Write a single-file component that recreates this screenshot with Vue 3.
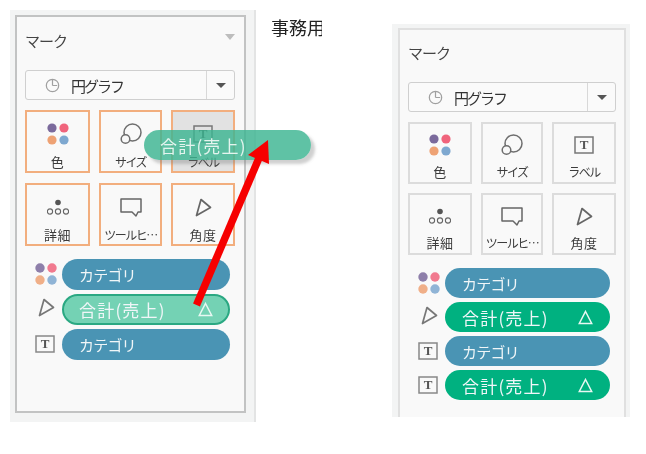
<script setup>
const panels = [
  {
    key: 'left',
    rows: [
      { icon: 'color', label: 'カテゴリ', kind: 'blue' },
      { icon: 'angle', label: '合計(売上)', kind: 'soft', delta: true },
      { icon: 'text', label: 'カテゴリ', kind: 'blue' }
    ]
  },
  {
    key: 'right',
    rows: [
      { icon: 'color', label: 'カテゴリ', kind: 'blue' },
      { icon: 'angle', label: '合計(売上)', kind: 'green', delta: true },
      { icon: 'text', label: 'カテゴリ', kind: 'blue' },
      { icon: 'text', label: '合計(売上)', kind: 'green', delta: true }
    ]
  }
]
const cards = [
  { icon: 'color', label: '色' },
  { icon: 'size', label: 'サイズ', tight: true },
  { icon: 'text', label: 'ラベル', tight: true, active: true },
  { icon: 'detail', label: '詳細' },
  { icon: 'tip', label: 'ツールヒ…', tight: true },
  { icon: 'angle', label: '角度' }
]
const dots = [
  { cx: 5, cy: 5, fill: '#7b6a9c' },
  { cx: 17, cy: 5, fill: '#f0647c' },
  { cx: 5, cy: 17, fill: '#eea274' },
  { cx: 17, cy: 17, fill: '#7ea8d0' }
]
</script>

<template>
  <div class="page">
    <section v-for="p in panels" :key="p.key" class="panel" :class="p.key">
      <div class="inner">
        <div class="head">
          <span class="title">マーク</span>
          <span v-if="p.key === 'left'" class="caret"></span>
        </div>
        <div class="select">
          <div class="select-main">
            <svg width="15" height="15" viewBox="0 0 16 16" fill="none" stroke="#a0a0a0" stroke-width="1.3">
              <circle cx="8" cy="8" r="6.6" />
              <path d="M8 8V2M8 8h5" />
            </svg>
            <span class="select-text">円グラフ</span>
          </div>
          <div class="select-arrow"><i></i></div>
        </div>
        <div class="cards">
          <div v-for="c in cards" :key="c.label" class="card" :class="{ active: c.active }">
            <div class="card-icon">
              <svg v-if="c.icon === 'color'" width="22" height="22" viewBox="0 0 22 22">
                <circle v-for="d in dots" :key="d.fill" :cx="d.cx" :cy="d.cy" r="4.6" :fill="d.fill" />
              </svg>
              <svg v-else-if="c.icon === 'size'" width="22" height="22" viewBox="0 0 22 22" fill="none" stroke="#6e6e6e" stroke-width="1.5">
                <circle cx="12.500" cy="9.500" r="8.500" />
                <circle cx="5.500" cy="16" r="4.300" fill="#f9f9f9" />
              </svg>
              <svg v-else-if="c.icon === 'text'" width="20" height="18" viewBox="0 0 20 18">
                <rect x="1" y="1" width="18" height="16" fill="none" stroke="#777" stroke-width="1.5" />
                <text x="10" y="13" text-anchor="middle" class="tee">T</text>
              </svg>
              <svg v-else-if="c.icon === 'detail'" width="22" height="16" viewBox="0 0 22 16" fill="none" stroke="#666" stroke-width="1.100">
                <circle cx="11" cy="3.500" r="2.800" fill="#555" stroke="none" />
                <circle cx="3" cy="12.500" r="2.600" />
                <circle cx="11" cy="12.500" r="2.600" />
                <circle cx="19" cy="12.500" r="2.600" />
              </svg>
              <svg v-else-if="c.icon === 'tip'" width="22" height="19" viewBox="0 0 22 19" fill="none" stroke="#666" stroke-width="1.500" stroke-linejoin="round">
                <path d="M1 1h20v13h-3l-2 4l-4-4H1z" />
              </svg>
              <svg v-else width="17" height="19" viewBox="0 0 17 19" fill="none" stroke="#666" stroke-width="1.700" stroke-linejoin="round">
                <path d="M6 1.500L15.500 9.500L1.500 17.500z" />
              </svg>
            </div>
            <span class="card-label" :class="{ tight: c.tight }">{{ c.label }}</span>
          </div>
        </div>
        <div class="rows">
          <div v-for="(r, i) in p.rows" :key="i" class="row">
            <div class="row-icon">
              <svg v-if="r.icon === 'color'" width="22" height="22" viewBox="0 0 22 22">
                <circle v-for="d in dots" :key="d.fill" :cx="d.cx" :cy="d.cy" r="4.700" :fill="d.fill" opacity="0.85" />
              </svg>
              <svg v-else-if="r.icon === 'text'" width="20" height="18" viewBox="0 0 20 18">
                <rect x="1" y="1" width="18" height="16" fill="none" stroke="#888" stroke-width="1.500" />
                <text x="10" y="13" text-anchor="middle" class="tee">T</text>
              </svg>
              <svg v-else class="row-angle" width="17" height="19" viewBox="0 0 17 19" fill="none" stroke="#777" stroke-width="1.700" stroke-linejoin="round">
                <path d="M6 1.500L15.500 9.500L1.500 17.500z" />
              </svg>
            </div>
            <div class="pill" :class="r.kind">
              <span :class="r.delta ? 'measure' : 'kana'">{{ r.label }}</span>
              <svg v-if="r.delta" width="15" height="15" viewBox="0 0 15 15" fill="none" stroke="#e8f8f2" stroke-width="1.500">
                <path d="M7.500 1.500L13.700 13.500H1.300z" />
              </svg>
            </div>
          </div>
        </div>
      </div>
    </section>

    <div class="note">事務用</div>

    <div class="drag"><span class="measure">合計(売上)</span></div>
    <svg class="arrow" width="646" height="454" viewBox="0 0 646 454">
      <path d="M196.500 305L259 158" stroke="#f60000" stroke-width="7.500" fill="none" />
      <path d="M268 140L248 155L269 164z" fill="#f60000" />
    </svg>
  </div>
</template>

<style>
html, body { margin: 0; background: #fff; }
</style>

<style scoped>
.page {
  position: relative;
  width: 646px;
  height: 454px;
  overflow: hidden;
  background: #fff;
  font-family: "Noto Sans CJK JP", "Noto Sans", sans-serif;
  filter: blur(0.4px);
}
.panel { position: absolute; box-sizing: border-box; background: #f3f4f4; }
.left {
  left: 10px; top: 10px; width: 246px; height: 412px;
  padding: 5px 8px 9px 5px;
  border-right: 2px solid #e3e4e4;
}
.right {
  left: 392px; top: 24px; width: 238px; height: 393px;
  padding: 4px 4px 0 6px;
}
.inner {
  box-sizing: border-box;
  height: 100%;
  background: #f9f9f9;
  border: 2px solid #c2c3c3;
  padding: 0 9px 0 8px;
}
.right .inner { border-color: #e0e0e0; border-bottom: 0; padding-right: 8px; }
.head {
  display: flex;
  align-items: center;
  justify-content: space-between;
  box-sizing: border-box;
  height: 53px;
  padding-bottom: 7px;
  font-size: 15px;
  color: #444;
}
.right .head { height: 52px; padding-bottom: 8px; }
.title { letter-spacing: -1px; }
.caret {
  width: 0; height: 0;
  margin-bottom: 6px;
  border-left: 5.500px solid transparent;
  border-right: 5.500px solid transparent;
  border-top: 6px solid #bdbdbd;
}
.select {
  display: flex;
  height: 30px;
  box-sizing: border-box;
  border: 1.500px solid #cfcfcf;
  border-radius: 3px;
  background: #fafafa;
}
.select-main {
  flex: 1;
  display: flex;
  align-items: center;
  gap: 11px;
  padding-left: 19px;
  font-size: 15px;
  color: #333;
}
.select-text { letter-spacing: -2px; }
.select-arrow {
  width: 27px;
  display: flex;
  align-items: center;
  justify-content: center;
  border-left: 1px solid #d8d8d8;
}
.select-arrow i {
  width: 0; height: 0;
  border-left: 5px solid transparent;
  border-right: 5px solid transparent;
  border-top: 5px solid #555;
}
.cards {
  display: grid;
  grid-template-columns: 65px 63px 64px;
  grid-auto-rows: 63px;
  gap: 10px 9px;
  margin-top: 10px;
}
.right .cards {
  grid-template-columns: 64px 62px 64px;
  grid-auto-rows: 62px;
  gap: 9px;
}
.card {
  box-sizing: border-box;
  display: flex;
  flex-direction: column;
  align-items: center;
  border: 2px solid #f2ae7e;
  background: #f9f9f9;
}
.right .card { border-color: #dcdcdc; }
.card.active { background: #e2e2e2; }
.right .card.active { background: #f9f9f9; }
.card-icon {
  height: 42px;
  padding-top: 2px;
  box-sizing: border-box;
  display: flex;
  align-items: center;
  justify-content: center;
}
.card-label {
  font-size: 13px;
  line-height: 16px;
  letter-spacing: 0.500px;
  color: #3c3c3c;
  white-space: nowrap;
}
.card-label.tight { font-size: 12px; letter-spacing: -1.500px; }
.right .card-icon { height: 40px; }
.tee {
  font-family: "Liberation Serif", serif;
  font-size: 13px;
  font-weight: 700;
  fill: #555;
}
.rows {
  display: flex;
  flex-direction: column;
  gap: 4.500px;
  margin-top: 13px;
}
.right .rows { gap: 4px; }
.row { display: flex; align-items: center; height: 30.500px; }
.right .row { height: 30px; }
.row-icon {
  width: 37px;
  padding-left: 10px;
  box-sizing: border-box;
  display: flex;
  align-items: center;
}
.row-angle { margin: -3px 0 0 3px; }
.pill {
  box-sizing: border-box;
  width: 168px;
  height: 100%;
  border-radius: 16px;
  display: flex;
  align-items: center;
  justify-content: space-between;
  padding: 0 17px;
  color: #f0f6f8;
}
.right .pill { width: 165px; }
.kana { font-size: 15px; letter-spacing: -0.800px; }
.measure { font-size: 17px; letter-spacing: 1.200px; }
.blue { background: #4a94b4; }
.green { background: #00b180; }
.soft { background: #74d2b4; border: 2px solid #2aa882; padding: 0 15px; }
.note {
  position: absolute;
  left: 271px;
  top: 15px;
  width: 51px;
  overflow: hidden;
  white-space: nowrap;
  font-size: 18px;
  line-height: 24px;
  color: #222;
}
.drag {
  position: absolute;
  left: 144px;
  top: 130px;
  width: 167px;
  height: 30px;
  box-sizing: border-box;
  padding-left: 16px;
  border-radius: 15px;
  background: rgba(60, 180, 145, 0.82);
  box-shadow: 4px 4px 3px rgba(120, 120, 120, 0.35);
  display: flex;
  align-items: center;
  color: #e4f4ee;
}
.arrow { position: absolute; left: 0; top: 0; pointer-events: none; }
</style>
